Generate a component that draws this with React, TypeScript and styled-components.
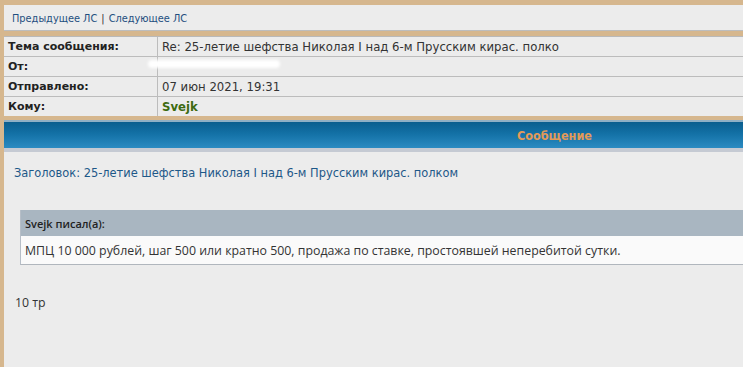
import React from 'react';
import styled, { createGlobalStyle } from 'styled-components';

const GlobalStyle = createGlobalStyle`
  html, body {
    margin: 0;
    padding: 0;
    background: #d6b78e;
    overflow: hidden;
  }
`;

const headerRows = [
  { label: 'Тема сообщения:', value: 'Re: 25-летие шефства Николая I над 6-м Прусским кирас. полко' },
  { label: 'От:', value: '', hidden: true },
  { label: 'Отправлено:', value: '07 июн 2021, 19:31' },
  { label: 'Кому:', value: 'Svejk', user: true },
];

export default function App() {
  return (
    <Page>
      <GlobalStyle />
      <NavBox>
        <NavLink>Предыдущее ЛС</NavLink>
        <Sep>|</Sep>
        <NavLink>Следующее ЛС</NavLink>
      </NavBox>
      <InfoTable>
        {headerRows.map((row) => (
          <InfoRow key={row.label}>
            <Label>{row.label}</Label>
            <Value $user={row.user}>
              {row.hidden ? <Blur /> : row.value}
            </Value>
          </InfoRow>
        ))}
      </InfoTable>
      <MessagePanel>
        <PanelHead>
          <HeadTitle>Сообщение</HeadTitle>
        </PanelHead>
        <PanelBody>
          <Subject>Заголовок: 25-летие шефства Николая I над 6-м Прусским кирас. полком</Subject>
          <Quote>
            <QuoteHead>Svejk писал(а):</QuoteHead>
            <QuoteText>
              МПЦ 10 000 рублей, шаг 500 или кратно 500, продажа по ставке, простоявшей неперебитой сутки.
            </QuoteText>
          </Quote>
          <PostText>10 тр</PostText>
        </PanelBody>
      </MessagePanel>
    </Page>
  );
}

const Page = styled.div`
  display: flex;
  flex-direction: column;
  width: 743px;
  height: 367px;
  padding: 5px 0 0 4px;
  box-sizing: border-box;
`;

const NavBox = styled.div`
  display: flex;
  align-items: center;
  gap: 4px;

  height: 26px;
  padding: 1px 8px 0;
  box-sizing: border-box;
  background: #ececec;
  border-bottom: 1px solid #bdbdbd;

  font-family: 'DejaVu Sans', Verdana, sans-serif;
  font-size: 9.8px;
  color: #1f4f80;
`;

const NavLink = styled.span``;

const Sep = styled.span`
  color: #333;
`;

const InfoTable = styled.div`
  display: flex;
  flex-direction: column;
  margin-top: 5px;
  background: #ececec;
  border-top: 1px solid #b9b9b9;
`;

const InfoRow = styled.div`
  display: grid;
  grid-template-columns: 154px 1fr;
  height: 19px;
  border-bottom: 1px solid #bcbcbc;

  &:last-child {
    border-bottom: none;
  }
`;

const Label = styled.div`
  display: flex;
  align-items: center;
  padding-left: 4px;
  border-right: 1px solid #bcbcbc;

  font-family: 'DejaVu Sans', Verdana, sans-serif;
  font-size: 11px;
  font-weight: bold;
  color: #222;
`;

const Value = styled.div<{ $user?: boolean }>`
  display: flex;
  align-items: center;
  padding-left: 4px;

  font-family: 'DejaVu Sans', Verdana, sans-serif;
  font-size: 11.7px;
  font-weight: ${({ $user }) => ($user ? 'bold' : 'normal')};
  color: ${({ $user }) => ($user ? '#3d6b10' : '#333')};
`;

const Blur = styled.div`
  width: 132px;
  height: 8px;
  margin-left: -14px;
  margin-top: -5px;
  background: #fff;
  border-radius: 4px;
  filter: blur(1.5px);
`;

const MessagePanel = styled.div`
  display: flex;
  flex-direction: column;
  flex: 1;
  margin-top: 4px;
  background: #ececec;
`;

const PanelHead = styled.div`
  display: flex;
  align-items: center;
  height: 26px;
  padding-left: 513px;
  background: linear-gradient(to bottom, #0a5e8e 0%, #1371a6 45%, #2b8bc2 100%);
  border-top: 2px solid #8fb0c5;
  border-bottom: 4px solid #c5cad3;
`;

const HeadTitle = styled.span`
  font-family: 'Liberation Sans Narrow', 'DejaVu Sans Condensed', 'Liberation Sans', sans-serif;
  font-size: 12.5px;
  font-weight: bold;
  color: #e39a58;
`;

const PanelBody = styled.div`
  display: flex;
  flex-direction: column;
  padding: 12px 0 0 10px;
`;

const Subject = styled.div`
  font-family: 'Liberation Sans Narrow', 'DejaVu Sans Condensed', 'Liberation Sans', sans-serif;
  font-size: 12.7px;
  line-height: 17px;
  color: #1d5888;
`;

const Quote = styled.div`
  display: flex;
  flex-direction: column;
  margin: 29px 0 0 6px;
  border-left: 1px solid #b6bec7;
  border-bottom: 1px solid #b0b6bd;
`;

const QuoteHead = styled.div`
  display: flex;
  align-items: center;
  height: 26px;
  padding-left: 4px;
  background: #a9b6c1;

  font-family: 'Open Sans', sans-serif;
  font-size: 11px;
  font-weight: 600;
  color: #222;
`;

const QuoteText = styled.div`
  display: flex;
  align-items: center;
  height: 28px;
  padding-left: 4px;
  background: #fafafa;

  font-family: 'Open Sans', sans-serif;
  font-size: 12.35px;
  color: #333;
`;

const PostText = styled.div`
  margin-top: 29px;
  padding-left: 1px;
  font-family: 'Open Sans', sans-serif;
  font-size: 12.3px;
  line-height: 17px;
  color: #333;
`;
